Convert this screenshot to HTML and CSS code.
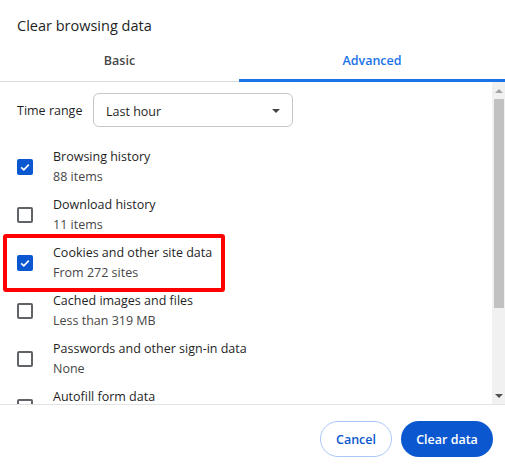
FILE: index.html
```
<!DOCTYPE html>
<html>
<head>
<meta charset="utf-8">
<link rel="stylesheet" href="styles.css">
</head>
<body>
<div class="dialog">
  <div class="title">Clear browsing data</div>
  <div class="tabs">
    <div class="tab basic">Basic</div>
    <div class="tab active">Advanced</div>
  </div>
  <div class="body">
    <div class="content">
      <div class="range-row">
        <span class="range-label">Time range</span>
        <div class="select">
          <span>Last hour</span>
          <span class="caret"></span>
        </div>
      </div>
      <div class="items">
        <div class="item">
          <span class="cb checked"><svg viewBox="0 0 16 16" width="16" height="16"><path d="M4.2 8.3 L6.8 10.8 L11.8 5.6" fill="none" stroke="#fff" stroke-width="1.6"/></svg></span>
          <div class="labels"><div class="main">Browsing history</div><div class="sub">88 items</div></div>
        </div>
        <div class="item">
          <span class="cb"></span>
          <div class="labels"><div class="main">Download history</div><div class="sub">11 items</div></div>
        </div>
        <div class="item highlighted">
          <span class="cb checked"><svg viewBox="0 0 16 16" width="16" height="16"><path d="M4.2 8.3 L6.8 10.8 L11.8 5.6" fill="none" stroke="#fff" stroke-width="1.6"/></svg></span>
          <div class="labels"><div class="main">Cookies and other site data</div><div class="sub">From 272 sites</div></div>
          <div class="redbox"></div>
        </div>
        <div class="item">
          <span class="cb"></span>
          <div class="labels"><div class="main">Cached images and files</div><div class="sub">Less than 319 MB</div></div>
        </div>
        <div class="item">
          <span class="cb"></span>
          <div class="labels"><div class="main">Passwords and other sign-in data</div><div class="sub">None</div></div>
        </div>
        <div class="item">
          <span class="cb"></span>
          <div class="labels"><div class="main">Autofill form data</div><div class="sub">&nbsp;</div></div>
        </div>
      </div>
    </div>
    <div class="scrollbar">
      <div class="arrow up"></div>
      <div class="track"><div class="thumb"></div></div>
      <div class="arrow down"></div>
    </div>
  </div>
  <div class="footer">
    <button class="btn cancel">Cancel</button>
    <button class="btn primary">Clear data</button>
  </div>
</div>
</body>
</html>
```
FILE: styles.css
```
* { box-sizing: border-box; }
html, body { margin: 0; padding: 0; background: #fff; }
body {
  font-family: "Open Sans", "Noto Sans", sans-serif;
  color: #1f1f1f;
  width: 505px;
  height: 468px;
  overflow: hidden;
}
.dialog { width: 505px; height: 468px; display: flex; flex-direction: column; }
.title {
  height: 48px;
  padding: 15px 0 0 17px;
  font-size: 14.5px;
  line-height: 22px;
  color: #1f1f1f;
}
.tabs {
  display: flex;
  height: 34px;
  border-bottom: 1px solid #dadce0;
}
.tab {
  flex: 1;
  text-align: center;
  font-size: 12.5px;
  font-weight: 600;
  color: #474747;
  padding-top: 3px;
  line-height: 20px;
}
.tab.basic { flex: none; width: 239px; }
.tab.active {
  color: #1a73e8;
  box-shadow: inset 0 -3px 0 #1a73e8;
  margin-bottom: -1px;
}
.body {
  height: 322px;
  display: flex;
  overflow: hidden;
}
.content {
  flex: 1;
  padding: 11px 0 0 17px;
  overflow: hidden;
}
.range-row { display: flex; align-items: center; }
.range-label { font-size: 12.5px; width: 76px; color: #1f1f1f; }
.select {
  width: 200px;
  height: 34px;
  border: 1px solid #c4c7c5;
  border-radius: 6px;
  display: flex;
  align-items: center;
  justify-content: space-between;
  padding: 2px 12px 0 12px;
  font-size: 12.5px;
}
.caret {
  width: 0; height: 0;
  border-left: 4px solid transparent;
  border-right: 4px solid transparent;
  border-top: 4px solid #444;
}
.items { margin-top: 20px; display: flex; flex-direction: column; gap: 8px; }
.item { position: relative; display: flex; align-items: center; height: 40px; }
.cb {
  width: 16px; height: 16px;
  border: 2px solid #5f6368;
  border-radius: 2px;
  flex: none;
  margin-right: 20px;
  display: flex;
}
.cb.checked { background: #0b57d0; border: none; border-radius: 2px; }
.labels { font-size: 12.5px; line-height: 20px; }
.main { color: #1f1f1f; }
.sub { color: #474747; }
.redbox {
  position: absolute;
  left: -14px;
  top: -9px;
  width: 222px;
  height: 58px;
  border: 4px solid #f00;
  border-radius: 3px;
  pointer-events: none;
}
.scrollbar {
  width: 13px;
  background: #f1f1f1;
  display: flex;
  flex-direction: column;
}
.arrow { height: 17px; display: flex; align-items: center; justify-content: center; }
.arrow.up::before {
  content: ""; width: 0; height: 0;
  border-left: 4px solid transparent; border-right: 4px solid transparent;
  border-bottom: 4px solid #a3a3a3;
}
.arrow.down::before {
  content: ""; width: 0; height: 0;
  border-left: 4px solid transparent; border-right: 4px solid transparent;
  border-top: 4px solid #505050;
}
.track { flex: 1; padding: 0 1px 0 2px; }
.thumb { height: 209px; background: #c1c1c1; }
.footer {
  flex: 1;
  border-top: 1px solid #e3e3e3;
  display: flex;
  justify-content: flex-end;
  align-items: flex-start;
  padding: 16px 12px 0 0;
  gap: 9px;
}
.btn {
  height: 36px;
  border-radius: 18px;
  font-family: "Open Sans", "Noto Sans", sans-serif;
  font-size: 12.5px;
  font-weight: 600;
  cursor: pointer;
}
.cancel { width: 72px; background: #fff; color: #0b57d0; border: 1px solid #a8c7fa; padding: 0; }
.primary { width: 92px; background: #0b57d0; color: #fff; border: none; padding: 0; }
```
